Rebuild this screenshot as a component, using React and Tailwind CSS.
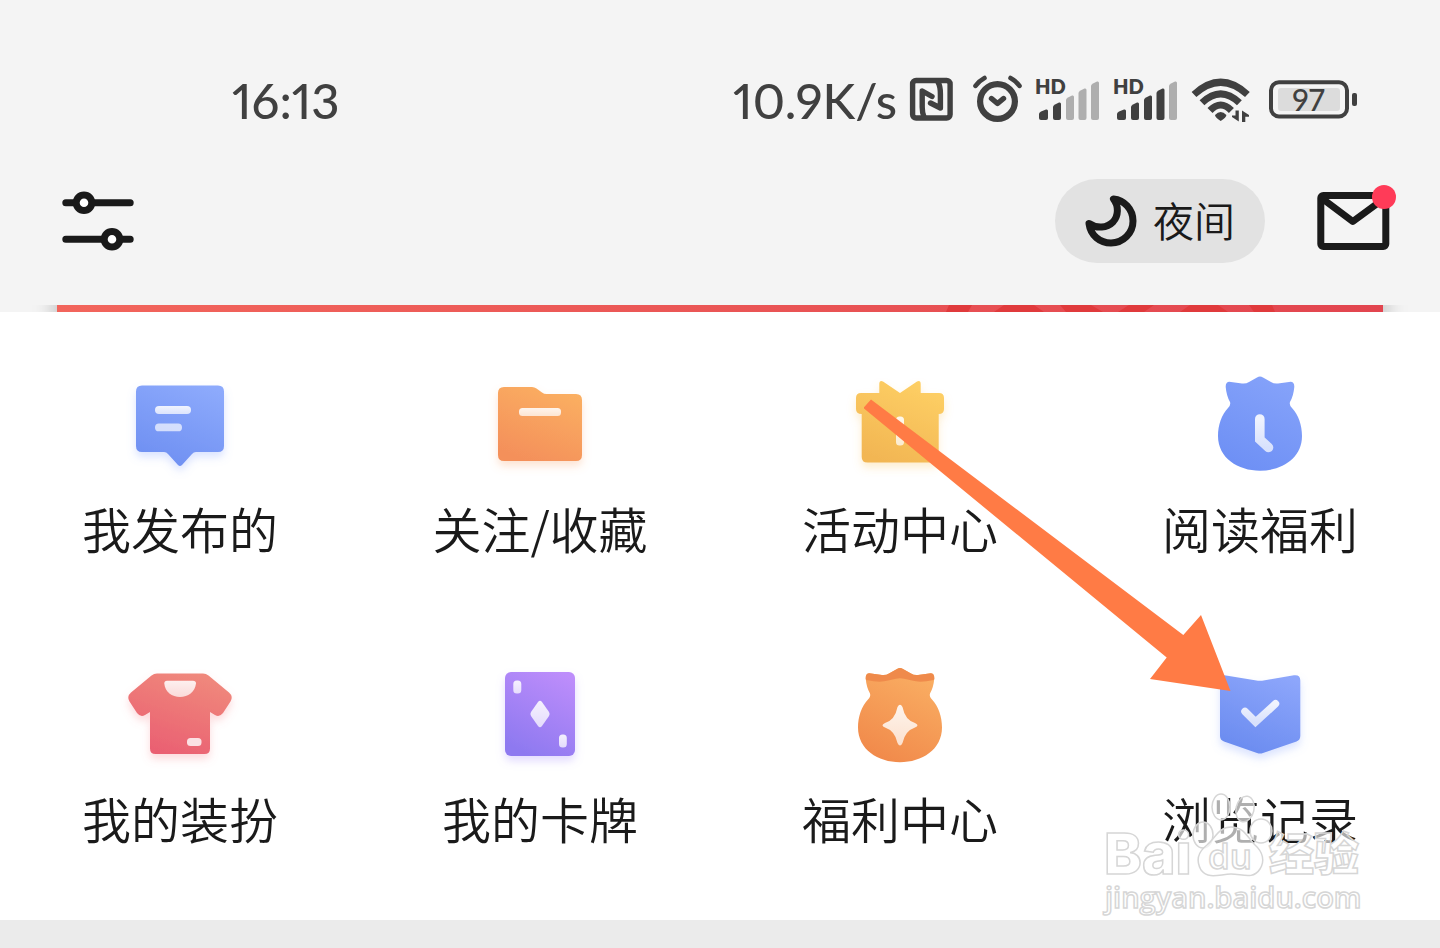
import React, { useState } from "react";

const INK = "#404040";

const NfcIcon = () => (
  <svg width="44" height="60" viewBox="0 0 44 60" fill="none" stroke={INK} strokeWidth="5.4" strokeLinecap="round" strokeLinejoin="round">
    <rect x="3.6" y="9.5" width="37.5" height="37.5" rx="3.5" />
    <path d="M15 46Q13.2 42 13.2 36V20L23 25.5" />
    <path d="M29 11Q31.4 15 31.4 23V37L21.5 32" />
  </svg>
);

const AlarmIcon = () => (
  <svg width="58" height="60" viewBox="0 0 58 60" fill="none" stroke={INK} strokeWidth="6.2" strokeLinecap="round" strokeLinejoin="round">
    <circle cx="32.5" cy="30.5" r="17.4" />
    <path d="M26.5 27.5L32.5 32.5L38.5 27.5" strokeWidth="5.4" />
    <path d="M10.5 14.8Q14 10 19.5 7M54.5 14.8Q51 10 45.5 7" strokeWidth="4.6" />
  </svg>
);

const bars = [
  { x: 4, y: 38, w: 9 },
  { x: 18, y: 31, w: 8 },
  { x: 31, y: 24, w: 8 },
  { x: 43.5, y: 17, w: 8 },
  { x: 56, y: 10, w: 8 },
];

const SignalIcon = ({ level }) => (
  <svg width="66" height="60" viewBox="0 0 66 60" className="font-[Lato]">
    <text x="0" y="23" fontSize="20" fontWeight="800" fill={INK}>
      HD
    </text>
    {bars.map((bar, i) => (
      <path
        key={bar.x}
        d={`M${bar.x} ${bar.y + 5}Q${bar.x} ${bar.y + 3.5} ${bar.x + 2} ${bar.y + 2.5}L${bar.x + bar.w - 2} ${bar.y + 0.5}Q${bar.x + bar.w} ${bar.y} ${bar.x + bar.w} ${bar.y + 2}V47Q${bar.x + bar.w} 49 ${bar.x + bar.w - 2} 49H${bar.x + 2}Q${bar.x} 49 ${bar.x} 47Z`}
        fill={i < level ? INK : "#aeaeae"}
      />
    ))}
  </svg>
);

const WifiIcon = () => (
  <svg width="66" height="60" viewBox="0 0 66 60" fill="none" stroke={INK} strokeWidth="7">
    <path d="M3 23.5Q29.7 -1 56.4 23.5" />
    <path d="M11 31.8Q29.7 14 48.4 31.8" />
    <path d="M19 39.5Q29.7 28.5 40.4 39.5" />
    <path d="M24 44Q29.7 38 35.4 44Q35.4 46.5 29.7 50Q24 46.5 24 44Z" fill={INK} stroke="none" />
    <path d="M44.5 39.5H47.8V50.5L41 46V44.5H44.5ZM51 51V39.5L58 44V45.8H54.3V51Z" fill={INK} stroke="none" />
  </svg>
);

const BatteryIcon = () => (
  <svg width="88" height="60" viewBox="0 0 88 60" className="font-[Lato]">
    <rect x="2" y="11.2" width="76" height="34.2" rx="8" fill="none" stroke={INK} strokeWidth="4" />
    <rect x="9" y="17" width="62" height="23" rx="3" fill="#dcdcdc" />
    <rect x="83" y="22" width="5" height="13" rx="2" fill={INK} />
    <text x="39.5" y="39.5" textAnchor="middle" fontSize="30" fontWeight="500" fill={INK}>
      97
    </text>
  </svg>
);

const SlidersIcon = () => (
  <svg width="72" height="60" viewBox="0 0 72 60" stroke="#1a1a1a" strokeWidth="7" strokeLinecap="round">
    <path d="M3.8 11.7H68.2M3.8 48.3H68.2" />
    <circle cx="22" cy="11.7" r="7.8" fill="#fff" />
    <circle cx="50" cy="48.3" r="7.8" fill="#fff" />
  </svg>
);

const MoonIcon = () => (
  <svg width="52" height="52" viewBox="0 0 52 52" fill="none" stroke="#1a1a1a" strokeWidth="7" strokeLinejoin="round">
    <path d="M28.5 4C39 5 48 14 48 26A22 22 0 0 1 26 48C15 48 5.5 40.5 4 28.5C12 34 22 33 28 27C33.5 21 34 11 28.5 4Z" />
  </svg>
);

const MailIcon = () => (
  <svg width="80" height="72" viewBox="0 0 80 72" fill="none" stroke="#1a1a1a" strokeWidth="7">
    <rect x="3.8" y="10.6" width="65" height="51" rx="2.5" />
    <path d="M3.8 12.5L35.8 36.5L68.5 12.5" strokeLinejoin="round" />
    <circle cx="67" cy="12" r="12" fill="#ff3b58" stroke="none" />
  </svg>
);

// each tile icon: body gradient + soft coloured glow below
const TileIcon = ({ id, from, to, glow, children }) => (
  <svg width="120" height="120" viewBox="0 0 120 120">
    <defs>
      <linearGradient id={`${id}-body`} x1="0.8" y1="0" x2="0.35" y2="1">
        <stop offset="0" stopColor={from} />
        <stop offset="1" stopColor={to} />
      </linearGradient>
      <linearGradient id={`${id}-mark`} x1="0" y1="0" x2="0" y2="1">
        <stop offset="0" stopColor="#fff" stopOpacity="0.88" />
        <stop offset="1" stopColor="#fff" stopOpacity="0.72" />
      </linearGradient>
      <filter id={`${id}-glow`} x="-20%" y="-20%" width="140%" height="150%">
        <feDropShadow dx="0" dy="5" stdDeviation="4" floodColor={glow} floodOpacity="0.28" />
      </filter>
    </defs>
    {children}
  </svg>
);

const PostIcon = () => (
  <TileIcon id="post" from="#8daafc" to="#6f90f2" glow="#7d9bff">
    <path filter="url(#post-glow)" fill="url(#post-body)" d="M22 20.5H98Q104 20.5 104 26.5V81Q104 87 98 87H76Q73.5 87 72 89L62 100Q60 102 58 100L48 89Q46.5 87 44 87H22Q16 87 16 81V26.5Q16 20.5 22 20.5Z" />
    <rect x="35" y="41" width="36" height="8" rx="4" fill="url(#post-mark)" />
    <rect x="35" y="58.5" width="27" height="7.8" rx="3.9" fill="#fff" fillOpacity="0.68" />
  </TileIcon>
);

const FolderIcon = () => (
  <TileIcon id="folder" from="#fbb062" to="#f4905a" glow="#f79a5c">
    <path filter="url(#folder-glow)" fill="url(#folder-body)" d="M24 22H52Q54.5 22 56.5 23.5L62 27.5Q64 29 66.5 29H96Q102 29 102 35V90Q102 96 96 96H24Q18 96 18 90V28Q18 22 24 22Z" />
    <rect x="39" y="43" width="42" height="8" rx="3.5" fill="url(#folder-mark)" />
  </TileIcon>
);

const GiftIcon = () => (
  <TileIcon id="gift" from="#fed065" to="#f2b653" glow="#f8c052">
    <path filter="url(#gift-glow)" fill="url(#gift-body)" d="M39.3 28V19Q39.3 15 43 16.5L60 28L77 16.5Q80.7 15 80.7 19V28H99Q104 28 104 33V44Q104 49 98.7 49V92Q98.7 97.5 93 97.5H27.5Q21.7 97.5 21.7 92V49Q16 49 16 44V33Q16 28 21 28Z" />
    <rect x="56" y="51.5" width="8" height="29" rx="3.5" fill="url(#gift-mark)" />
  </TileIcon>
);

const BAG = "M25.7 22Q25.5 16 31 17L42 18.5Q46 19 49 17L57 12.5Q60 10.5 63 12.5L71 17Q74 19 78 18.5L89 17Q94.5 16 94.3 22Q93.5 31 90 37Q89 40 92 43C98.5 50 102 60 102 71C102 93 82 105.7 60 105.7S18 93 18 71C18 60 21.5 50 28 43Q31 40 30 37Q26.5 31 25.7 22Z";

const ReadIcon = () => (
  <TileIcon id="read" from="#86a3fa" to="#6e90f5" glow="#ffffff">
    <path fill="url(#read-body)" d={BAG} />
    <path d="M59.8 54V74.5L68.5 82.5" fill="none" stroke="url(#read-mark)" strokeWidth="9.6" strokeLinecap="round" strokeLinejoin="miter" />
  </TileIcon>
);

const ShirtIcon = () => (
  <TileIcon id="shirt" from="#f08a7c" to="#ea6072" glow="#f57d84">
    <path filter="url(#shirt-glow)" fill="url(#shirt-body)" d="M37 18.5H83Q86 18.5 88.5 20.5L109 37.5Q113.5 41.5 110.5 46.5L103 58Q99.5 62.5 95 60L90 57V93.5Q90 99 84.5 99H35.5Q30 99 30 93.5V57L25 60Q20.5 62.5 17 58L9.5 46.5Q6.5 41.5 11 37.5L31.5 20.5Q34 18.5 37 18.5Z" />
    <path fill="url(#shirt-mark)" d="M47 25.7H73Q76 25.7 76 28.5C75 37 68 42 60 42S45 37 44.3 28.5Q44.3 25.7 47 25.7Z" />
    <rect x="67" y="83" width="14.5" height="8" rx="3.5" fill="#fff" fillOpacity="0.8" />
  </TileIcon>
);

const CardIcon = () => (
  <TileIcon id="card" from="#bd8dfb" to="#8e79f0" glow="#9a80ff">
    <rect filter="url(#card-glow)" fill="url(#card-body)" x="25" y="17" width="70" height="84" rx="6" />
    <rect x="33.3" y="25.5" width="8" height="13" rx="3.5" fill="url(#card-mark)" />
    <rect x="79" y="79.5" width="7.8" height="13" rx="3.5" fill="url(#card-mark)" />
    <path fill="url(#card-mark)" d="M58 47Q60 44.5 62 47L69 57Q70.3 59 69 61L62 71Q60 73.5 58 71L51 61Q49.7 59 51 57Z" />
  </TileIcon>
);

const WelfareIcon = () => (
  <TileIcon id="welfare" from="#fab064" to="#f18a4b" glow="#f79a5c">
    <g transform="translate(0 1.5)">
      <path fill="url(#welfare-body)" d={BAG} />
      <path fill="#ef8a4b" d="M25.7 22Q25.5 16 31 17L42 18.5Q46 19 49 17L57 12.5Q60 10.5 63 12.5L71 17Q74 19 78 18.5L89 17Q94.5 16 94.3 22Q94.3 23 93.5 23.5Q80 26.5 72 24L64 22.3Q60 21.3 56 22.3L48 24Q40 26.5 26.5 23.5Q25.7 23 25.7 22Z" />
    </g>
    <path fill="url(#welfare-mark)" d="M57.5 52Q60 47.5 62.5 52Q65 65 75 68Q80 70.3 75 72.6Q65 76 62.5 88Q60 93 57.5 88Q55 76 45 72.6Q40 70.3 45 68Q55 65 57.5 52Z" />
  </TileIcon>
);

const HistoryIcon = () => (
  <TileIcon id="history" from="#8da6fb" to="#6b8cf0" glow="#7d9bff">
    <path filter="url(#history-glow)" fill="url(#history-body)" d="M26 20.5L58 25.7Q60 26 62 25.7L94 20.3Q100.3 19.5 100.3 25.5V81Q100.3 85 96.5 86.5L63 98Q60 99 57 98L24 86.5Q20 85 20 81V25.5Q20 19.5 26 20.5Z" />
    <path d="M45 56.5L55.5 67L75.5 48.8" fill="none" stroke="url(#history-mark)" strokeWidth="7.5" strokeLinecap="round" />
  </TileIcon>
);

const menu = [
  { label: "我发布的", Icon: PostIcon },
  { label: "关注/收藏", Icon: FolderIcon },
  { label: "活动中心", Icon: GiftIcon },
  { label: "阅读福利", Icon: ReadIcon },
  { label: "我的装扮", Icon: ShirtIcon },
  { label: "我的卡牌", Icon: CardIcon },
  { label: "福利中心", Icon: WelfareIcon },
  { label: "浏览记录", Icon: HistoryIcon },
];

const StatusBar = () => (
  <div className="flex items-center justify-between pl-[232px] pr-[83px] h-[62px] font-[Lato] font-medium proportional-nums text-[49px] leading-[60px] text-[#404040]">
    <span className="pb-0.5">16:13</span>
    <div className="flex items-center gap-3">
      <span className="pb-0.5">10.9K/s</span>
      <NfcIcon />
      <AlarmIcon />
      <SignalIcon level={2} />
      <SignalIcon level={4} />
      <WifiIcon />
      <BatteryIcon />
    </div>
  </div>
);

const Banner = () => (
  <div className="h-[7px] overflow-hidden bg-[#f4f4f4] px-[57px]">
    <div className="flex justify-end h-full bg-linear-to-r from-[#f2655c] to-[#e2454f] shadow-[0_0_20px_4px_rgba(0,0,0,0.35)]">
      <svg width="437" height="7" viewBox="0 0 437 7" fill="#e03a3c">
        <path d="M3 0H26L22 7H0ZM58 0H88L98 7H48ZM114 0H145L157 7H120ZM183 0H208L198 7H172ZM244 0H272L282 7H234ZM303 0H326L329 7H308Z" />
      </svg>
    </div>
  </div>
);

const Pointer = () => (
  <svg className="absolute left-[60%] top-[87px] pointer-events-none" width="368" height="293" viewBox="0 0 368 293" fill="#ff7b45">
    <path d="M-0.7 9L7 0.5L319.3 236L337 216L366.5 292L286 280L302.7 258.5Z" />
  </svg>
);

const Watermark = () => (
  <svg className="absolute right-[76px] bottom-0 pointer-events-none font-['Open_Sans','Noto_Sans_CJK_SC',sans-serif]" width="264" height="130" viewBox="0 0 264 130" fill="#fff" fillOpacity="0.65" stroke="#d6d6d6" strokeWidth="1.5">
    <text x="4" y="84" fontSize="57" fontWeight="800" className="font-[Inter]">
      Bai
    </text>
    <ellipse cx="103" cy="45" rx="10" ry="13" />
    <ellipse cx="121" cy="17" rx="9" ry="13" />
    <ellipse cx="145" cy="19" rx="9" ry="13" transform="rotate(12 145 19)" />
    <ellipse cx="161" cy="41" rx="11" ry="12" />
    <path d="M131 37C144 37 147 47 155 55C163 62 165 71 160 79C153 90 142 84 131 84S109 90 101 80C96 71 98 62 107 55C116 47 119 37 131 37Z" />
    <text x="108" y="79" fontSize="35" fontWeight="600">
      du
    </text>
    <text x="169" y="81" fontSize="45" fontWeight="900">
      经验
    </text>
    <text x="5" y="118" fontSize="29" fontWeight="600">
      jingyan.baidu.com
    </text>
  </svg>
);

export default function App() {
  const [night, setNight] = useState(false);

  return (
    <div className="flex flex-col min-h-screen bg-[#ebebeb] font-['Noto_Sans_CJK_SC',sans-serif] text-[#1a1a1a]">
      <header className="bg-[#f4f4f4] pt-[70px] pb-[42px]">
        <StatusBar />
        <div className="flex items-center justify-between mt-[47px] pl-[62px] pr-[43px]">
          <button type="button" aria-label="设置">
            <SlidersIcon />
          </button>
          <div className="flex items-center gap-[52px]">
            <button
              type="button"
              aria-pressed={night}
              onClick={() => setNight(!night)}
              className="flex items-center gap-4 h-[84px] px-[30px] rounded-full bg-[#e2e2e2] text-[41px] leading-[48px] font-[350]"
            >
              <MoonIcon />
              <span className="pb-1">夜间</span>
            </button>
            <button type="button" aria-label="消息">
              <MailIcon />
            </button>
          </div>
        </div>
      </header>

      <Banner />

      <main className="relative bg-white pt-[53px] pb-[78px]">
        <nav className="grid grid-cols-4 gap-y-[103px]">
          {menu.map(({ label, Icon }) => (
            <a key={label} href="#" className="flex flex-col items-center gap-[19px] text-[49px] leading-[48px] font-[350] whitespace-nowrap">
              <Icon />
              <span>{label}</span>
            </a>
          ))}
        </nav>
        <Pointer />
        <Watermark />
      </main>
    </div>
  );
}
